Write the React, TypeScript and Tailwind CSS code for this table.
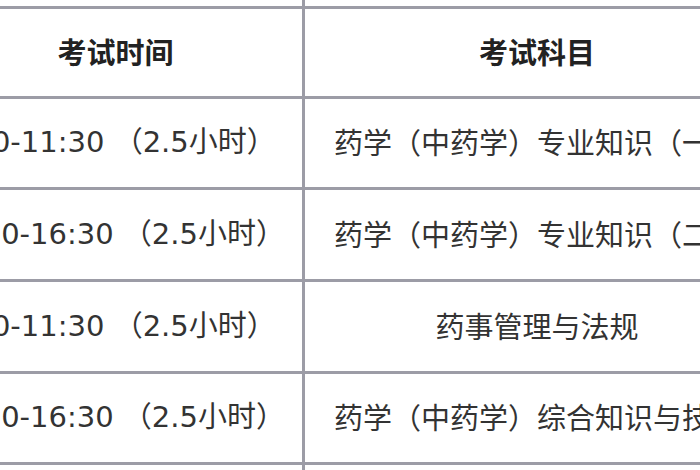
import React from "react";

const rows = [
  { time: "9:00-11:30 （2.5小时）", subject: "药学（中药学）专业知识（一）", h: "h-[91px]" },
  { time: "14:00-16:30 （2.5小时）", subject: "药学（中药学）专业知识（二）", h: "h-[92px]" },
  { time: "9:00-11:30 （2.5小时）", subject: "药事管理与法规", h: "h-[92px]" },
  { time: "14:00-16:30 （2.5小时）", subject: "药学（中药学）综合知识与技能", h: "h-[91px]" },
];

export default function App() {
  return (
    <div
      className="w-[700px] h-[470px] overflow-hidden bg-white"
      style={{ fontFamily: '"Open Sans", "Noto Sans CJK SC", sans-serif' }}
    >
      <div className="-ml-[71px] -mt-[82px] w-[850px]">
        <div className="flex h-[91px] border-b-[3px] border-[#9c9ca6]">
          <div className="w-[376px] border-r-[3px] border-[#9c9ca6]" />
          <div className="flex-1" />
        </div>
        <div className="flex h-[90px] border-b-[3px] border-[#9c9ca6] text-[29px] font-bold text-[#222]">
          <div className="w-[376px] border-r-[3px] border-[#9c9ca6] flex items-center justify-center">
            考试时间
          </div>
          <div className="w-[464px] flex items-center justify-center">考试科目</div>
        </div>
        {rows.map((r, i) => (
          <div
            key={i}
            className={`flex ${r.h} border-b-[3px] border-[#9c9ca6] text-[29px] text-[#333]`}
          >
            <div className="w-[376px] border-r-[3px] border-[#9c9ca6] flex items-center justify-center whitespace-pre pr-[10px] font-['DejaVu_Sans','Noto_Sans_CJK_SC',sans-serif]">
              {r.time}
            </div>
            <div className="w-[464px] flex items-center justify-center whitespace-nowrap">
              {r.subject}
            </div>
          </div>
        ))}
        <div className="flex h-[91px]">
          <div className="w-[376px] border-r-[3px] border-[#9c9ca6]" />
          <div className="flex-1" />
        </div>
      </div>
    </div>
  );
}
